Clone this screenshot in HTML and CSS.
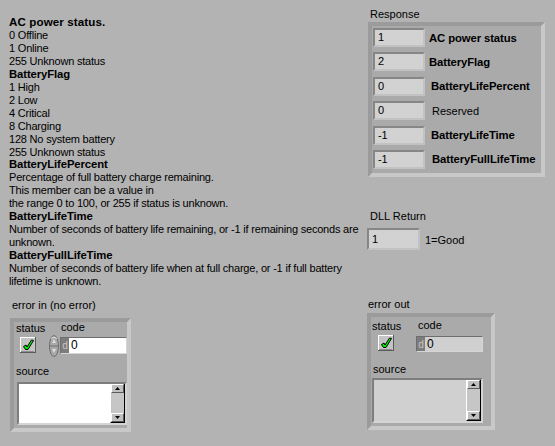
FILE: index.html
```html
<!DOCTYPE html>
<html>
<head>
<meta charset="utf-8">
<link rel="stylesheet" href="styles.css">
</head>
<body>
<div class="page">
  <div class="notes">
    <div class="h h-ac">AC power status.</div>
    <div>0 Offline</div>
    <div>1 Online</div>
    <div>255 Unknown status</div>
    <div class="h">BatteryFlag</div>
    <div>1 High</div>
    <div>2 Low</div>
    <div>4 Critical</div>
    <div>8 Charging</div>
    <div>128 No system battery</div>
    <div>255 Unknown status</div>
    <div class="h">BatteryLifePercent</div>
    <div>Percentage of full battery charge remaining.</div>
    <div>This member can be a value in</div>
    <div>the range 0 to 100, or 255 if status is unknown.</div>
    <div class="h">BatteryLifeTime</div>
    <div>Number of seconds of battery life remaining, or -1 if remaining seconds are</div>
    <div>unknown.</div>
    <div class="h">BatteryFullLifeTime</div>
    <div>Number of seconds of battery life when at full charge, or -1 if full battery</div>
    <div>lifetime is unknown.</div>
  </div>

  <div class="right">
    <div class="lbl resp-lbl">Response</div>
    <div class="cluster resp">
      <div class="row"><div class="num">1</div><span class="lab b">AC power status</span></div>
      <div class="row"><div class="num">2</div><span class="lab b">BatteryFlag</span></div>
      <div class="row"><div class="num">0</div><span class="lab b l2">BatteryLifePercent</span></div>
      <div class="row"><div class="num">0</div><span class="lab l3">Reserved</span></div>
      <div class="row"><div class="num">-1</div><span class="lab b l2">BatteryLifeTime</span></div>
      <div class="row"><div class="num">-1</div><span class="lab b l3">BatteryFullLifeTime</span></div>
    </div>
    <div class="lbl dll-lbl">DLL Return</div>
    <div class="dll"><div class="num num-dll">1</div><span class="good">1=Good</span></div>
  </div>

  <div class="errin">
    <div class="lbl err-lbl-in">error in (no error)</div>
    <div class="cluster ecl ecl-in">
      <div class="erow1"><span class="st">status</span><span class="cd">code</span></div>
      <div class="erow2">
        <div class="chk">
          <svg width="16" height="16" viewBox="0 0 16 16">
            <rect x="0" y="0" width="16" height="16" fill="#c4c4c4"/>
            <path d="M0 0H16V1H1V16H0Z" fill="#ffffff"/>
            <path d="M16 0V16H0V15H15V0Z" fill="#5a5a5a"/>
            <path d="M14 1V15H1V14H14Z" fill="#8c8c8c"/>
            <path d="M3.5 9.5 L6 8 L7 10 L11.5 3 L13.5 3.5 L8 12.5 L5.5 12.5 Z" fill="#00f000" stroke="#000" stroke-width="1" stroke-linejoin="round"/>
          </svg>
        </div>
        <div class="spin">
          <svg width="10" height="22" viewBox="0 0 10 22">
            <ellipse cx="5" cy="11" rx="4.5" ry="10.5" fill="#a9a9a9" stroke="#6e6e6e" stroke-width="1"/>
            <path d="M2 3.5 Q5 0.8 8 3.5" fill="none" stroke="#e0e0e0" stroke-width="1"/>
            <line x1="1" y1="11" x2="9" y2="11" stroke="#6e6e6e" stroke-width="1"/>
            <path d="M5 4 L7 8 H3 Z" fill="#dcdcdc"/>
            <path d="M5 18 L7 14 H3 Z" fill="#dcdcdc"/>
          </svg>
        </div>
        <div class="codefield cf-in"><span class="radix">d</span><span class="cval white">0</span></div>
      </div>
      <div class="src-lbl src-in">source</div>
      <div class="srcbox sb-in white">
        <div class="scroll">
          <div class="sbtn"><svg width="5" height="3" viewBox="0 0 5 3"><path d="M2.5 0 L5 3 H0 Z" fill="#000"/></svg></div>
          <div class="sbtn"><svg width="5" height="3" viewBox="0 0 5 3"><path d="M0 0 H5 L2.5 3 Z" fill="#000"/></svg></div>
        </div>
      </div>
    </div>
  </div>

  <div class="errout">
    <div class="lbl err-lbl-out">error out</div>
    <div class="cluster ecl ecl-out">
      <div class="erow1 erow1-out"><span class="st">status</span><span class="cd">code</span></div>
      <div class="erow2 erow2-out">
        <div class="chk chk-out">
          <svg width="16" height="16" viewBox="0 0 16 16">
            <rect x="0" y="0" width="16" height="16" fill="#c4c4c4"/>
            <path d="M0 0H16V1H1V16H0Z" fill="#ffffff"/>
            <path d="M16 0V16H0V15H15V0Z" fill="#5a5a5a"/>
            <path d="M14 1V15H1V14H14Z" fill="#8c8c8c"/>
            <path d="M3.5 9.5 L6 8 L7 10 L11.5 3 L13.5 3.5 L8 12.5 L5.5 12.5 Z" fill="#00f000" stroke="#000" stroke-width="1" stroke-linejoin="round"/>
          </svg>
        </div>
        <div class="codefield cf-out"><span class="radix">d</span><span class="cval grey">0</span></div>
      </div>
      <div class="src-lbl src-out">source</div>
      <div class="srcbox sb-out grey">
        <div class="scroll">
          <div class="sbtn"><svg width="5" height="3" viewBox="0 0 5 3"><path d="M2.5 0 L5 3 H0 Z" fill="#000"/></svg></div>
          <div class="sbtn"><svg width="5" height="3" viewBox="0 0 5 3"><path d="M0 0 H5 L2.5 3 Z" fill="#000"/></svg></div>
        </div>
      </div>
    </div>
  </div>
</div>
</body>
</html>
```

FILE: styles.css
```css
html, body {
  margin: 0;
  padding: 0;
}
body {
  background: #b3b3b3;
  font-family: "Liberation Sans", Arial, sans-serif;
  font-size: 11px;
  color: #000;
  width: 555px;
  height: 446px;
  overflow: hidden;
}
.page {
  display: grid;
  grid-template-columns: 368px 187px;
  grid-template-rows: 296px 150px;
}

/* notes */
.notes {
  padding: 16px 0 0 9px;
  line-height: 12.95px;
  white-space: nowrap;
  letter-spacing: -0.2px;
}
.notes .h {
  font-weight: bold;
  font-size: 11.3px;
  letter-spacing: -0.1px;
}
.notes .h-ac {
  font-size: 11.6px;
  letter-spacing: 0.1px;
}

.lbl {
  line-height: 13px;
  white-space: nowrap;
}

/* right column */
.right {
  padding-top: 8px;
}
.resp-lbl {
  margin-left: 2px;
  margin-bottom: 1px;
}
.cluster {
  box-sizing: border-box;
  border: 4px solid;
  border-color: #9b9b9b #c8c8c8 #c8c8c8 #9b9b9b;
  background: #aaaaaa;
}
.resp {
  width: 177px;
  height: 155px;
  padding: 2px 0 0 1px;
  display: flex;
  flex-direction: column;
  gap: 5.4px;
}
.row {
  display: flex;
  align-items: center;
  height: 19px;
}
.num {
  box-sizing: border-box;
  width: 52px;
  height: 19px;
  border: 2px solid;
  border-color: #868686 #c2c2c2 #c2c2c2 #868686;
  background: #d2d2d2;
  padding-left: 3px;
  line-height: 15px;
  letter-spacing: -0.2px;
}
.lab {
  margin-left: 4px;
  white-space: nowrap;
}
.lab.b {
  font-weight: bold;
  font-size: 11.3px;
  letter-spacing: -0.1px;
}
.lab.l2 { margin-left: 6px; }
.lab.l3 { margin-left: 7px; }

.dll-lbl {
  margin-top: 33px;
  margin-left: 2px;
}
.dll {
  display: flex;
  align-items: center;
  margin-top: 5px;
  margin-left: -1px;
}
.num-dll {
  width: 53px;
  height: 22px;
  line-height: 18px;
  border-width: 2px;
}
.good {
  margin-left: 5px;
  padding-top: 2px;
}

/* error clusters */
.errin {
  padding-top: 3px;
}
.err-lbl-in {
  margin-left: 12px;
  margin-bottom: 6px;
}
.errout {
  padding-top: 2px;
}
.err-lbl-out {
  margin-left: 0;
  margin-bottom: 2px;
}
.ecl-in {
  margin-left: 10px;
  width: 121px;
  height: 114px;
}
.ecl-out {
  margin-left: -1px;
  width: 128px;
  height: 117px;
}
.erow1 {
  display: grid;
  grid-template-columns: 47px 1fr;
  line-height: 13px;
}
.erow1 .st {
  padding-left: 2px;
}
.erow1 .cd {
  position: relative;
  top: -1px;
}
.erow1-out {
  margin-top: 3px;
}
.erow1-out .st {
  padding-left: 1px;
}
.erow2 {
  display: flex;
  align-items: flex-start;
  height: 22px;
}
.erow2-out {
  height: 19px;
}
.chk {
  width: 16px;
  height: 16px;
  margin-top: 2px;
  margin-left: 6px;
}
.chk-out {
  margin-left: 7px;
}
.chk svg, .spin svg {
  display: block;
}
.spin {
  width: 10px;
  height: 22px;
  margin-left: 13px;
}
.codefield {
  box-sizing: border-box;
  display: flex;
  height: 17px;
  border: 1px solid;
  border-color: #6e6e6e #d6d6d6 #d6d6d6 #6e6e6e;
}
.cf-in {
  margin-left: 1px;
  margin-top: 2px;
  width: 67px;
}
.cf-out {
  margin-left: 22px;
  margin-top: 3px;
  width: 67px;
  height: 16px;
}
.radix {
  width: 8px;
  background: #7c7c7c;
  color: #c6c6c6;
  font-size: 10px;
  line-height: 15px;
  text-align: center;
}
.cval {
  flex: 1;
  padding-left: 2px;
  font-size: 12px;
  line-height: 15px;
}
.cf-out .cval { line-height: 14px; }
.white { background: #ffffff; }
.grey { background: #d0d0d0; }

.src-lbl {
  line-height: 13px;
}
.src-in {
  margin-top: 8px;
  padding-left: 2px;
}
.src-out {
  margin-top: 11px;
  padding-left: 2px;
}
.srcbox {
  box-sizing: border-box;
  display: flex;
  justify-content: flex-end;
  border: 2px solid;
  border-color: #7e7e7e #d4d4d4 #d4d4d4 #7e7e7e;
}
.sb-in {
  margin-top: 4px;
  margin-left: 3px;
  width: 110px;
  height: 43px;
}
.sb-out {
  margin-top: 2px;
  margin-left: 1px;
  width: 111px;
  height: 45px;
}
.scroll {
  box-sizing: border-box;
  width: 15px;
  display: flex;
  flex-direction: column;
  justify-content: space-between;
  background: #c6c6c6;
  border-left: 1px solid #ffffff;
  border-right: 1px solid #000000;
  border-bottom: 1px solid #000000;
}
.sbtn {
  box-sizing: border-box;
  height: 9px;
  border: 1px solid;
  border-color: #ffffff #5a5a5a #5a5a5a #ffffff;
  background: #c0c0c0;
  display: flex;
  align-items: center;
  justify-content: center;
}
.sbtn svg {
  display: block;
}
```
